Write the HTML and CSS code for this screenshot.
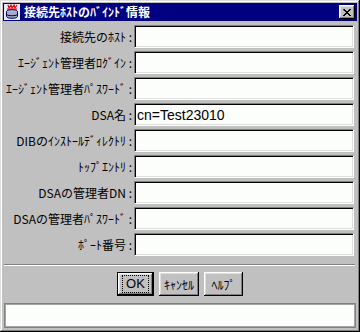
FILE: index.html
```html
<!DOCTYPE html>
<html lang="ja">
<head>
<meta charset="utf-8">
<title>接続先ﾎｽﾄのﾊﾞｲﾝﾄﾞ情報</title>
<link rel="stylesheet" href="styles.css">
</head>
<body>
<div class="window">
  <div class="titlebar">
    <svg class="app-icon" width="16" height="16" viewBox="0 0 16 16">
      <rect x="0" y="0" width="16" height="16" fill="#e8e8f8"/>
      <path d="M4 1 L5 4 L7 1 L8 4 L10 1 L11 4 L13 1" fill="none" stroke="#e00000" stroke-width="1.2"/>
      <path d="M3 5 H13" stroke="#e00000" stroke-width="1"/>
      <ellipse cx="8" cy="7.5" rx="5.5" ry="1.8" fill="#c8c8d8" stroke="#000060" stroke-width="1"/>
      <path d="M2.5 7.5 V12.5 A5.5 1.8 0 0 0 13.5 12.5 V7.5" fill="#a8a8c8" stroke="#000060" stroke-width="1"/>
      <path d="M2.5 10 A5.5 1.8 0 0 0 13.5 10" fill="none" stroke="#000060" stroke-width="1"/>
    </svg>
    <span class="title-text">接続先ﾎｽﾄのﾊﾞｲﾝﾄﾞ情報</span>
    <div class="close-btn">
      <svg width="8" height="7" viewBox="0 0 8 7">
        <path d="M0 0h2v1h1v1h2v-1h1v-1h2v1h-1v1h-1v1h-1v1h1v1h1v1h1v1h-2v-1h-1v-1h-2v1h-1v1h-2v-1h1v-1h1v-1h1v-1h-1v-1h-1z" fill="#000"/>
      </svg>
    </div>
  </div>

  <div class="form">
    <div class="label">接続先のﾎｽﾄ :</div><div class="field"></div>
    <div class="label">ｴｰｼﾞｪﾝﾄ管理者ﾛｸﾞｲﾝ :</div><div class="field"></div>
    <div class="label">ｴｰｼﾞｪﾝﾄ管理者ﾊﾟｽﾜｰﾄﾞ :</div><div class="field"></div>
    <div class="label">DSA名 :</div><div class="field"><span class="value">cn=Test23010</span></div>
    <div class="label">DIBのｲﾝｽﾄｰﾙﾃﾞｨﾚｸﾄﾘ :</div><div class="field"></div>
    <div class="label">ﾄｯﾌﾟｴﾝﾄﾘ :</div><div class="field"></div>
    <div class="label">DSAの管理者DN :</div><div class="field"></div>
    <div class="label">DSAの管理者ﾊﾟｽﾜｰﾄﾞ :</div><div class="field"></div>
    <div class="label">ﾎﾟｰﾄ番号 :</div><div class="field"></div>
  </div>

  <div class="separator"></div>

  <div class="buttons">
    <div class="btn btn-default btn-ok"><span class="focus">OK</span></div>
    <div class="btn btn-cancel">ｷｬﾝｾﾙ</div>
    <div class="btn btn-help">ﾍﾙﾌﾟ</div>
  </div>

  <div class="status"></div>
</div>
</body>
</html>
```
FILE: styles.css
```css
html, body {
  margin: 0;
  padding: 0;
  background: #c0c0c0;
}

body {
  font-family: "Noto Sans CJK JP", "DejaVu Sans", sans-serif;
  font-size: 12px;
  color: #000;
}

.window {
  width: 360px;
  height: 332px;
  box-sizing: border-box;
  padding: 3px;
  background: #c0c0c0;
  box-shadow:
    inset -1px -1px #000000,
    inset 1px 1px #dfdfdf,
    inset -2px -2px #808080,
    inset 2px 2px #ffffff;
  display: flex;
  flex-direction: column;
}

.titlebar {
  height: 18px;
  background: #000080;
  display: flex;
  align-items: center;
  padding: 0 2px 0 1px;
  box-sizing: border-box;
}

.app-icon {
  display: block;
  flex: none;
}

.title-text {
  margin-left: 4px;
  color: #ffffff;
  font-weight: bold;
  font-size: 12px;
  line-height: 18px;
  white-space: nowrap;
  flex: 1;
}

.close-btn {
  width: 16px;
  height: 14px;
  box-sizing: border-box;
  background: #c0c0c0;
  box-shadow:
    inset -1px -1px #000000,
    inset 1px 1px #ffffff,
    inset -2px -2px #808080,
    inset 2px 2px #dfdfdf;
  display: flex;
  align-items: center;
  justify-content: center;
  flex: none;
}

.close-btn svg {
  display: block;
  margin-left: -1px;
}

.form {
  margin-top: 4px;
  display: grid;
  grid-template-columns: 129px 220px;
  grid-auto-rows: 23px;
  column-gap: 2px;
  row-gap: 3px;
}

.label {
  text-align: right;
  white-space: nowrap;
  line-height: 23px;
  font-size: 12px;
  letter-spacing: 0;
}

.field {
  box-sizing: border-box;
  height: 23px;
  background: #fbfefb;
  border: 1px solid;
  border-color: #808080 #ffffff #ffffff #808080;
  box-shadow: inset 1px 1px #000000, inset -1px -1px #dfdfdf;
  display: flex;
  align-items: center;
  padding-left: 2px;
}

.value {
  font-family: "Liberation Sans", Arial, sans-serif;
  font-size: 14px;
  line-height: 16px;
  color: #000;
}

.separator {
  margin: 8px 2px 0 1px;
  height: 0;
  border-top: 1px solid #808080;
  border-bottom: 1px solid #ffffff;
}

.buttons {
  margin-top: 6px;
  display: flex;
  justify-content: center;
  gap: 5px;
  height: 24px;
}

.btn {
  box-sizing: border-box;
  height: 24px;
  background: #c0c0c0;
  box-shadow:
    inset -1px -1px #000000,
    inset 1px 1px #ffffff,
    inset -2px -2px #808080,
    inset 2px 2px #dfdfdf;
  display: flex;
  align-items: center;
  justify-content: center;
  font-size: 12px;
  white-space: nowrap;
}

.btn-ok { width: 37px; }
.btn-cancel { width: 40px; }
.btn-help { width: 39px; }

.btn-default {
  border: 1px solid #000;
}

.focus {
  font-family: "Liberation Sans", Arial, sans-serif;
  font-size: 13px;
  line-height: 14px;
  padding: 1px 3px;
  border: 1px dotted #000;
}

.status {
  margin: 7px 1px 0 1px;
  height: 25px;
  box-sizing: border-box;
  background: #fbfefb;
  border: 1px solid #808080;
  box-shadow: inset 0 0 0 1px #a4a4a4;
}
```
